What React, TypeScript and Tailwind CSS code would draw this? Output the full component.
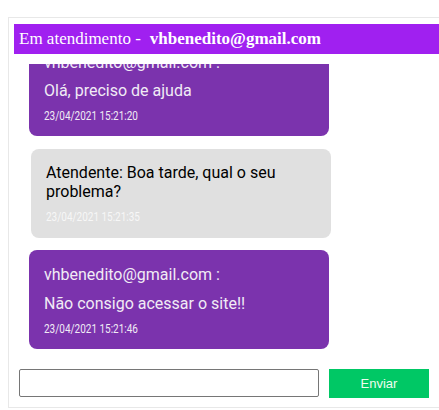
import React from "react";

const roboto = { fontFamily: "Roboto, 'Noto Sans', sans-serif" };

function Stamp({ text, color }: { text: string; color: string }) {
  return (
    <div className={`mt-[9px] h-[13px] text-[12px] leading-[13px] ${color}`}>
      <span className="inline-block origin-left scale-x-[0.83] whitespace-nowrap">{text}</span>
    </div>
  );
}

function UserBubble({ msg, time }: { msg: string; time: string }) {
  return (
    <div className="ml-[20px] w-[300px] shrink-0 rounded-[8px] bg-[#7b33ad] px-[15px] pt-[16px] pb-[13px] text-[#f1ebf5]">
      <p className="text-[16px] leading-[18.75px]">vhbenedito@gmail.com :</p>
      <p className="mt-[10px] text-[16px] leading-[18.75px]">{msg}</p>
      <Stamp text={time} color="text-[#f1ebf5]" />
    </div>
  );
}

export default function App() {
  return (
    <div className="relative h-[410px] w-[439px] overflow-hidden bg-white" style={roboto}>
      <div className="ml-[8px] mt-[17px] flex h-[391px] w-[440px] flex-col border border-[#e8e8e8]">
        <div
          className="ml-[5px] mt-[6px] flex h-[29.5px] shrink-0 items-center bg-[#a020f0] pl-[5px] text-[17px] leading-[19.5px] text-white"
          style={{ fontFamily: "'Liberation Serif', serif" }}
        >
          <span className="whitespace-nowrap">Em atendimento -</span>
          <b className="ml-[9px] whitespace-nowrap font-bold">vhbenedito@gmail.com</b>
        </div>
        <div className="mt-[10px] flex h-[285px] shrink-0 flex-col justify-end overflow-hidden">
          <UserBubble msg="Olá, preciso de ajuda" time="23/04/2021 15:21:20" />
          <div className="ml-[22px] mt-[13px] w-[300px] shrink-0 rounded-[8px] bg-[#e0e0e0] px-[15px] pt-[15px] pb-[14px] text-black">
            <p className="text-[16px] leading-[18.75px]">Atendente: Boa tarde, qual o seu problema?</p>
            <Stamp text="23/04/2021 15:21:35" color="text-[#f7f7f7]" />
          </div>
          <div className="mt-[12.5px]">
            <UserBubble msg="Não consigo acessar o site!!" time="23/04/2021 15:21:46" />
          </div>
        </div>
        <div className="mt-[20.5px] flex items-start gap-[10px] pl-[10px]">
          <input
            type="text"
            className="h-[28px] w-[300px] rounded-[2px] border border-[#767676] bg-white outline-none"
          />
          <button
            className="h-[29px] w-[100px] bg-[#00c865] text-[13px] text-[#eefcee]"
            style={{ fontFamily: "'Liberation Sans', Arial, sans-serif" }}
          >
            Enviar
          </button>
        </div>
      </div>
    </div>
  );
}
